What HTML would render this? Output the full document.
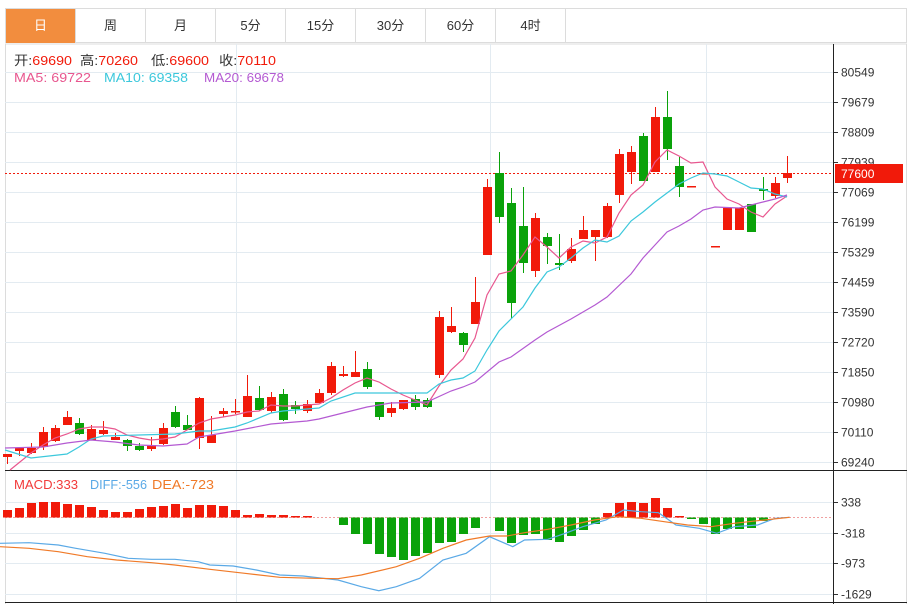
<!DOCTYPE html>
<html><head><meta charset="utf-8"><style>
body{margin:0;width:909px;height:604px;background:#fff;overflow:hidden;font-family:"Liberation Sans","Noto Sans CJK SC",sans-serif}
.tabs{position:absolute;left:5px;top:8px;width:902px;height:35px;border:1px solid #dcdcdc;box-sizing:border-box;display:flex}
.tabs div{width:70px;height:34px;line-height:34px;text-align:center;font-size:13px;color:#333;border-right:1px solid #dcdcdc;box-sizing:border-box}
.tabs div.a{background:#f28d3e;color:#fff}
svg{position:absolute;left:0;top:0}
</style></head><body>
<div class="tabs"><div class="a">日</div><div>周</div><div>月</div><div>5分</div><div>15分</div><div>30分</div><div>60分</div><div>4时</div></div>
<svg id="s" width="909" height="604" xmlns="http://www.w3.org/2000/svg"></svg>
<script>
var s=document.getElementById('s'),h='';
function L(x1,y1,x2,y2,c,w,d){h+='<line x1="'+x1+'" y1="'+y1+'" x2="'+x2+'" y2="'+y2+'" stroke="'+c+'" stroke-width="'+(w||1)+'"'+(d?' stroke-dasharray="'+d+'"':'')+'/>';}
function T(x,y,t,c,sz){h+='<text x="'+x+'" y="'+y+'" fill="'+c+'" font-size="'+(sz||12)+'">'+t+'</text>';}
function TL(x,y,len,inner){h+='<text x="'+x+'" y="'+y+'" font-size="13" textLength="'+len+'" lengthAdjust="spacingAndGlyphs">'+inner+'</text>';}
var G='#e3ebf1';
L(5,44,907,44,'#dcdcdc');L(5.5,44,5.5,604,'#dcdcdc');L(906.5,44,906.5,604,'#dcdcdc');
var levels=['80549','79679','78809','77939','77069','76199','75329','74459','73590','72720','71850','70980','70110','69240'];
for(var i=0;i<14;i++){var y=72.5+i*30;L(5,y,833,y,G);L(833,y,838,y,'#333');T(841,y+4,levels[i],'#333');}
var ml=[['338',502.5],['-318',533.5],['-973',563.5],['-1629',594.5]];
ml.forEach(function(m){L(5,m[1],833,m[1],G);L(833,m[1],838,m[1],'#333');T(841,m[1]+4,m[0],'#333');});
[236.5,490.5,706.5].forEach(function(x){L(x,44,x,602,G);});
L(5,470.5,907,470.5,'#222');L(5,602.5,907,602.5,'#222');L(833.5,44,833.5,604,'#222');
var R='#f11a0a',GR='#0aa20a';
var c=[[454,457,454,464,R],[448,451,447,456,R],[448,453,443,454,R],[432,447,427,450,R],[428,441,425,442,R],[417,425,411,425,R],[423,434,418,435,GR],[429,440,425,440,R],[430,434,421,435,R],[437,440,433,440,R],[440,446,439,451,GR],[446,450,443,451,GR],[445,449,437,451,R],[428,444,423,445,R],[412,427,406,428,GR],[425,430,415,430,GR],[398,438,397,449,R],[435,443,416,443,R],[411,414,408,417,R],[411,412,399,414,R],[396,417,375,417,R],[398,410,386,411,GR],[397,411,392,413,R],[394,420,389,421,GR],[405,409,401,414,GR],[404,411,400,413,R],[393,403,389,403,R],[366,393,362,395,R],[374,376,366,377,R],[372,377,351,377,R],[369,387,362,389,GR],[402,417,402,420,GR],[408,413,402,417,R],[400,409,400,410,R],[399,407,395,410,GR],[400,407,398,408,GR],[317,375,311,378,R],[326,332,307,333,R],[333,345,332,352,GR],[302,324,277,324,R],[187,255,179,255,R],[173,217,152,223,GR],[203,303,188,318,GR],[226,263,187,273,GR],[218,271,213,277,R],[237,246,233,264,GR],[263,265,234,270,GR],[249,261,238,263,R],[230,239,216,239,R],[230,237,230,261,R],[206,237,203,238,R],[154,195,149,203,R],[152,172,146,184,R],[136,181,133,181,GR],[117,172,107,172,R],[117,149,91,160,GR],[166,187,157,197,GR],[186,187,186,187,R],[173,174,173,174,R],[246,247,246,247,R],[208,230,208,230,R],[208,230,208,230,R],[204,232,204,232,GR],[189,191,177,200,GR],[183,196,177,198,R],[173,178,156,183,R]];
L(5,173.5,833,173.5,'#f11a0a',1,'2,2');
c.forEach(function(k,i){var x=7+12*i;h+='<line x1="'+(x+.5)+'" y1="'+k[2]+'" x2="'+(x+.5)+'" y2="'+k[3]+'" stroke="'+k[4]+'"/>';h+='<rect x="'+(x-4)+'" y="'+k[0]+'" width="9" height="'+Math.max(1.5,k[1]-k[0])+'" fill="'+k[4]+'"/>';});
function P(pts,col){h+='<polyline fill="none" stroke="'+col+'" stroke-width="1.2" points="'+pts.map(function(p){return p[0]+','+p[1]}).join(' ')+'"/>';}
P([[10,470],[31,453],[43,445],[55,438],[67,434],[79,429],[91,427],[103,427],[115,429],[127,435],[139,438],[151,440],[163,439],[175,437],[187,430],[199,423],[211,419],[223,417],[235,415],[247,412],[259,411],[271,405],[283,406],[295,406],[307,405],[319,404],[331,398],[343,390],[355,383],[367,378],[379,382],[391,389],[403,395],[415,400],[427,405],[439,386],[451,370],[463,359],[475,338],[487,295],[499,274],[511,271],[523,255],[535,237],[547,247],[559,258],[571,247],[583,241],[595,243],[607,237],[619,213],[631,195],[643,185],[655,162],[667,150],[679,156],[691,163],[703,162],[715,187],[727,199],[739,204],[751,212],[763,217],[775,204],[787,196]],'#e8578f');
P([[5,450],[31,458],[67,454],[79,447],[91,439],[103,436],[139,435],[175,434],[199,431],[211,431],[235,427],[247,423],[271,413],[283,411],[319,408],[331,401],[355,393],[367,393],[403,393],[427,393],[439,384],[451,380],[463,378],[475,371],[487,350],[499,331],[511,319],[523,307],[535,288],[547,272],[559,267],[571,258],[583,248],[595,240],[607,242],[619,236],[631,221],[643,212],[655,202],[667,193],[679,184],[691,178],[703,173],[715,174],[727,176],[739,182],[751,188],[763,189],[775,194],[787,197]],'#3cc8dc');
P([[5,448],[43,447],[67,443],[91,440],[115,442],[139,445],[163,446],[187,444],[199,437],[235,431],[271,424],[307,421],[319,419],[343,413],[367,407],[391,403],[427,402],[451,391],[463,387],[475,382],[499,362],[511,357],[535,340],[547,332],[571,319],[595,305],[607,297],[631,274],[643,258],[655,245],[667,232],[679,226],[691,219],[703,210],[715,207],[739,208],[751,205],[763,202],[775,199],[787,195]],'#b45ad2');
h+='<rect x="835" y="164" width="68" height="19" fill="#f11a0a"/>';T(841,178,'77600','#fff');
var mv=[510,508,503,502,502,504,505,507,510,512,512,509,507,506,504,508,505,505,506,510,515,514,515,515,516,516,517,517,525,534,544,554,557,560,556,553,543,542,534,528,517,531,543,535,534,540,542,536,530,524,513,503,502,503,498,508,516,519,524,534,529,529,528,521,518,517];
L(5,517.5,833,517.5,'#f0a0a0',1,'2,2');
mv.forEach(function(v,i){var x=7+12*i-4;if(v<517)h+='<rect x="'+x+'" y="'+v+'" width="9" height="'+(517.5-v)+'" fill="'+R+'"/>';else if(v>518)h+='<rect x="'+x+'" y="517.5" width="9" height="'+(v-517.5)+'" fill="'+GR+'"/>';});
function Q(a,col){P(a.map(function(p){return [(p[0]/1.716).toFixed(1),(380+p[1]/3).toFixed(1)]}),col);}
Q([[0,490],[50,488],[100,495],[130,505],[180,520],[220,535],[260,538],[300,538],[340,545],[360,555],[400,558],[440,570],[480,585],[520,588],[580,600],[620,620],[650,632],[680,620],[720,595],[760,540],[800,520],[840,470],[880,500],[900,480],[940,478],[970,460],[1000,440],[1040,420],[1070,390],[1100,395],[1130,398],[1160,435],[1200,445],[1230,460],[1260,440],[1300,435],[1330,415],[1355,412]],'#5aa9e6');
Q([[0,500],[50,505],[100,515],[150,530],[200,540],[260,548],[300,555],[360,568],[420,580],[480,592],[540,595],[580,596],[620,585],[680,560],[720,535],[760,505],[800,480],[840,468],[870,468],[900,458],[940,448],[980,435],[1020,420],[1060,410],[1100,415],[1140,425],[1180,435],[1220,440],[1260,430],[1300,422],[1355,412]],'#f07a28');
// legends
TL(14,65,58,'<tspan fill="#333">开:</tspan><tspan fill="#f11a0a">69690</tspan>');
TL(80,65,58,'<tspan fill="#333">高:</tspan><tspan fill="#f11a0a">70260</tspan>');
TL(151,65,58,'<tspan fill="#333">低:</tspan><tspan fill="#f11a0a">69600</tspan>');
TL(219,65,57,'<tspan fill="#333">收:</tspan><tspan fill="#f11a0a">70110</tspan>');
TL(14,82,77,'<tspan fill="#e8578f">MA5: 69722</tspan>');
TL(104,82,84,'<tspan fill="#3cc8dc">MA10: 69358</tspan>');
TL(204,82,80,'<tspan fill="#b45ad2">MA20: 69678</tspan>');
TL(14,489,64,'<tspan fill="#f23a3a">MACD:333</tspan>');
TL(90,489,57,'<tspan fill="#5aa9e6">DIFF:-556</tspan>');
TL(152,489,62,'<tspan fill="#f07a28">DEA:-723</tspan>');
s.innerHTML=h;
</script>
</body></html>
